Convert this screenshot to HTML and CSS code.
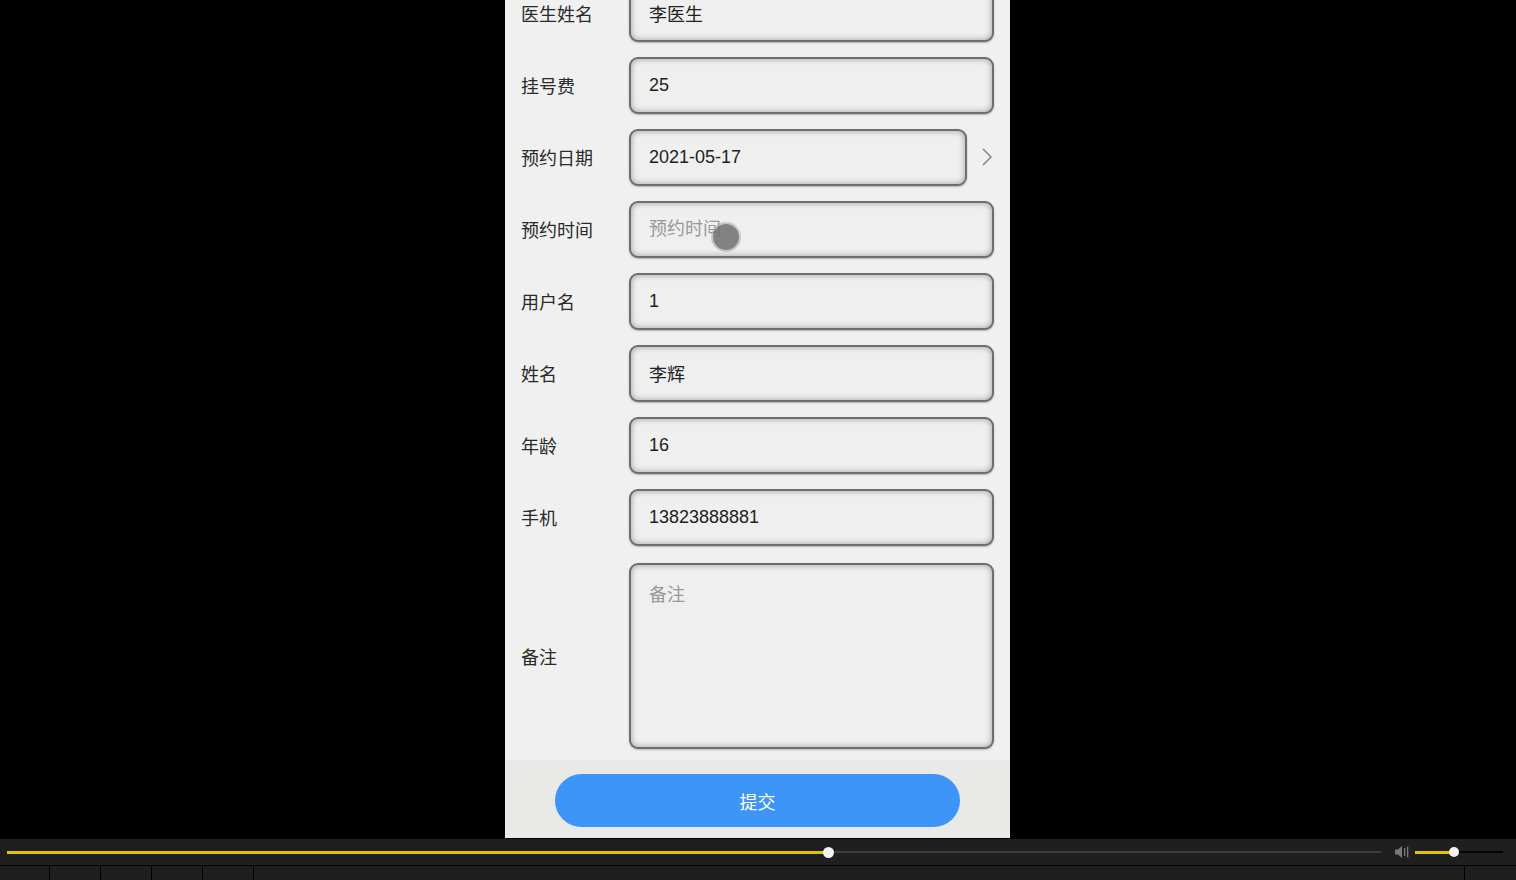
FILE: index.html
```html
<!DOCTYPE html>
<html lang="zh">
<head>
<meta charset="utf-8">
<title>预约挂号</title>
<link rel="stylesheet" href="styles.css">
</head>
<body>
<div class="stage">
  <div class="screen">
    <div class="phone">
      <div class="content">
        <div class="form">
          <div class="row"><span class="label">医生姓名</span><input class="field" value="李医生"></div>
          <div class="row"><span class="label">挂号费</span><input class="field" value="25"></div>
          <div class="row"><span class="label">预约日期</span><input class="field" value="2021-05-17"><span class="chev"><svg width="12" height="18" viewBox="0 0 12 18"><polyline points="2,1 10,9 2,17" fill="none" stroke="#8a8a8a" stroke-width="1.6"/></svg></span></div>
          <div class="row"><span class="label">预约时间</span><input class="field" placeholder="预约时间"></div>
          <div class="row"><span class="label">用户名</span><input class="field" value="1"></div>
          <div class="row"><span class="label">姓名</span><input class="field" value="李辉"></div>
          <div class="row"><span class="label">年龄</span><input class="field" value="16"></div>
          <div class="row"><span class="label">手机</span><input class="field" value="13823888881"></div>
          <div class="row row-tall"><span class="label">备注</span><textarea class="field area" placeholder="备注"></textarea></div>
        </div>
        <div class="touch"></div>
      </div>
      <div class="footer"><button class="submit">提交</button></div>
    </div>
  </div>
  <div class="player">
    <div class="seek">
      <div class="played"></div>
      <div class="knob"></div>
      <div class="rest"></div>
      <svg class="vol" width="16" height="14" viewBox="0 0 16 14"><path d="M1 4.5h3l4-3.5v12l-4-3.5H1z" fill="#7a7a7a"/><rect x="10" y="3" width="1.3" height="8" fill="#7a7a7a"/><rect x="13" y="1.5" width="1.3" height="11" fill="#7a7a7a"/></svg>
      <div class="vol-on"></div>
      <div class="knob small"></div>
      <div class="vol-off"></div>
    </div>
    <div class="tabs">
      <div class="tab t1"></div><div class="tab"></div><div class="tab"></div><div class="tab"></div><div class="tab"></div><div class="tab grow"></div><div class="tab last"></div>
    </div>
  </div>
</div>
</body>
</html>
```
FILE: styles.css
```css
html, body {
  margin: 0;
  padding: 0;
  background: #000;
}
body {
  font-family: "Liberation Sans", "Noto Sans CJK SC", sans-serif;
  overflow: hidden;
}
.stage {
  width: 1516px;
  height: 880px;
  display: flex;
  flex-direction: column;
}
.screen {
  height: 839px;
  display: flex;
  padding-left: 505px;
}
.phone {
  width: 505px;
  height: 838px;
  display: flex;
  flex-direction: column;
  background: #f0f0f0;
}
.content {
  flex: 1;
  overflow: hidden;
  position: relative;
}
.form {
  margin-top: -23px;
}
.row {
  display: flex;
  align-items: center;
  height: 72px;
  padding: 0 16px 0 16px;
  box-sizing: border-box;
}
.row-tall {
  height: 206px;
  padding-top: 10px;
  padding-bottom: 10px;
}
.label {
  width: 108px;
  flex: none;
  font-size: 18px;
  color: #2a2a2a;
}
.field {
  flex: 1;
  min-width: 0;
  height: 57px;
  box-sizing: border-box;
  border: 2px solid #6e6e6e;
  border-radius: 9px;
  background: #efefef;
  box-shadow: inset 0 0 6px rgba(0, 0, 0, 0.35), 0 1px 2px rgba(0, 0, 0, 0.25);
  padding: 0 18px;
  font-family: "Liberation Sans", "Noto Sans CJK SC", sans-serif;
  font-size: 18px;
  color: #222;
  outline: none;
  margin: 0;
}
.field::placeholder {
  color: #999;
}
.area {
  height: 186px;
  resize: none;
  padding: 17px 18px;
  line-height: 26px;
}
.chev {
  width: 27px;
  flex: none;
  display: flex;
  justify-content: flex-end;
  padding-right: 1px;
  box-sizing: border-box;
}
.touch {
  position: absolute;
  left: 208px;
  top: 224px;
  width: 26px;
  height: 26px;
  border-radius: 50%;
  background: rgba(110, 110, 110, 0.85);
  box-shadow: 0 0 0 2px rgba(170, 170, 170, 0.6);
}
.footer {
  height: 78px;
  flex: none;
  background: #e9e9e7;
  padding-top: 14px;
  box-sizing: border-box;
  display: flex;
  justify-content: center;
}
.submit {
  width: 405px;
  height: 53px;
  border: none;
  border-radius: 27px;
  background: #3d95f8;
  color: #fff;
  font-family: "Liberation Sans", "Noto Sans CJK SC", sans-serif;
  font-size: 18px;
  padding: 0;
}
.player {
  height: 41px;
  display: flex;
  flex-direction: column;
}
.seek {
  height: 26px;
  background: #1f1f1f;
  display: flex;
  align-items: center;
  padding-left: 7px;
}
.played {
  width: 821px;
  height: 3px;
  background: #e3c400;
}
.knob {
  width: 11px;
  height: 11px;
  border-radius: 50%;
  background: #f2f2f2;
  margin: 0 -5px;
  position: relative;
  z-index: 1;
  flex: none;
}
.rest {
  width: 552px;
  height: 2px;
  background: #3d3d3d;
}
.vol {
  margin-left: 13px;
  flex: none;
}
.vol-on {
  margin-left: 5px;
  width: 39px;
  height: 3px;
  background: #e3c400;
}
.small {
  width: 10px;
  height: 10px;
}
.vol-off {
  width: 49px;
  height: 2px;
  background: #050505;
}
.tabs {
  flex: 1;
  display: flex;
  border-top: 1px solid #000;
  background: #1f1f1f;
}
.tab {
  width: 50px;
  border-right: 1px solid #000;
}
.t1 {
  width: 49px;
}
.grow {
  flex: 1;
}
.last {
  width: 51px;
  border-right: none;
}
```
